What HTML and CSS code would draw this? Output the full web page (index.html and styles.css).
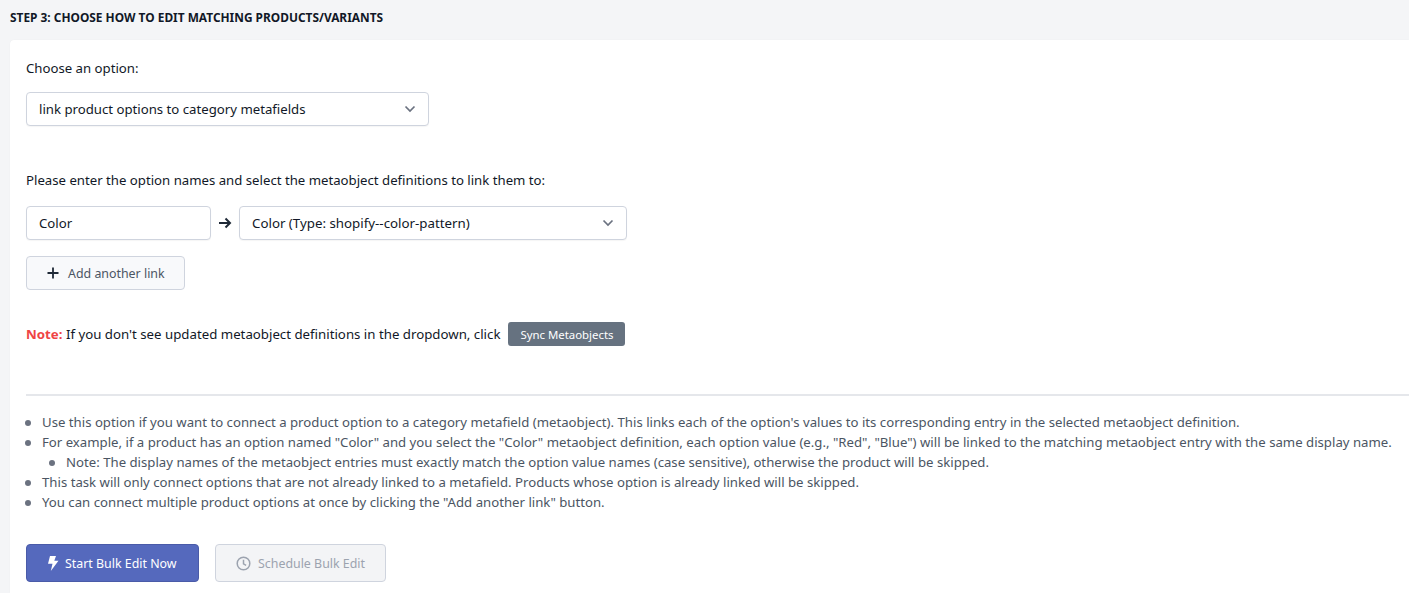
FILE: index.html
```html
<!DOCTYPE html>
<html lang="en">
<head>
<meta charset="utf-8">
<title>Step 3</title>
<link rel="stylesheet" href="styles.css">
</head>
<body>
<h2 class="step-title">STEP 3: CHOOSE HOW TO EDIT MATCHING PRODUCTS/VARIANTS</h2>
<section class="card">
  <label class="label">Choose an option:</label>
  <div class="field select-main">
    <span>link product options to category metafields</span>
    <svg class="chev" width="12" height="8" viewBox="0 0 12 8"><path d="M1.500 1.500 6 6l4.500-4.500" fill="none" stroke="#6b7280" stroke-width="1.700"/></svg>
  </div>
  <p class="label prompt">Please enter the option names and select the metaobject definitions to link them to:</p>
  <div class="link-row">
    <div class="field name-input"><span>Color</span></div>
    <svg class="arrow" width="14" height="12" viewBox="0 0 14 12"><path d="M1 6h11M7.500 1.500 12 6l-4.500 4.500" fill="none" stroke="#1f2937" stroke-width="2"/></svg>
    <div class="field select-def">
      <span>Color (Type: shopify--color-pattern)</span>
      <svg class="chev" width="12" height="8" viewBox="0 0 12 8"><path d="M1.500 1.500 6 6l4.500-4.500" fill="none" stroke="#6b7280" stroke-width="1.700"/></svg>
    </div>
  </div>
  <button class="btn-add" type="button">
    <svg width="12" height="12" viewBox="0 0 12 12"><path d="M6 .500v11M.500 6h11" fill="none" stroke="#1f2937" stroke-width="1.800"/></svg>
    <span>Add another link</span>
  </button>
  <div class="note">
    <span><strong class="note-tag">Note:</strong> If you don't see updated metaobject definitions in the dropdown, click</span>
    <button class="btn-sync" type="button">Sync Metaobjects</button>
  </div>
  <hr class="rule">
  <ul class="help">
    <li>Use this option if you want to connect a product option to a category metafield (metaobject). This links each of the option's values to its corresponding entry in the selected metaobject definition.</li>
    <li>For example, if a product has an option named "Color" and you select the "Color" metaobject definition, each option value (e.g., "Red", "Blue") will be linked to the matching metaobject entry with the same display name.
      <ul><li>Note: The display names of the metaobject entries must exactly match the option value names (case sensitive), otherwise the product will be skipped.</li></ul>
    </li>
    <li>This task will only connect options that are not already linked to a metafield. Products whose option is already linked will be skipped.</li>
    <li>You can connect multiple product options at once by clicking the "Add another link" button.</li>
  </ul>
  <div class="actions">
    <button class="btn-start" type="button">
      <svg width="12" height="15" viewBox="0 0 12 15"><path d="M3 0h6L7.300 4.800H11.500L3.800 15l1.700-7.200H1z" fill="#fff"/></svg>
      <span>Start Bulk Edit Now</span>
    </button>
    <button class="btn-schedule" type="button">
      <svg width="15" height="15" viewBox="0 0 15 15"><circle cx="7.500" cy="7.500" r="6.300" fill="none" stroke="#9ca3af" stroke-width="1.500"/><path d="M7.500 3.800v4l2.600 1.500" fill="none" stroke="#9ca3af" stroke-width="1.500"/></svg>
      <span>Schedule Bulk Edit</span>
    </button>
  </div>
</section>
</body>
</html>
```
FILE: styles.css
```css
* { box-sizing: border-box; }
html, body { margin: 0; height: 593px; overflow: hidden; }
body {
  background: #f4f5f7;
  font-family: "Noto Sans", "Open Sans", sans-serif;
  font-size: 13.200px;
  color: #111827;
  padding: 9px 0 0 10px;
}
.step-title {
  margin: 0 0 15px;
  font-size: 11.900px;
  line-height: 16px;
  font-weight: 700;
  color: #111827;
}
.card {
  height: 553px;
  background: #fff;
  border-radius: 4px 0 0 0;
  padding: 19px 0 0 16px;
  box-shadow: 0 0 1px rgba(0,0,0,.08);
}
.label { display: block; margin: 0; line-height: 18px; }
.field {
  display: flex;
  align-items: center;
  justify-content: space-between;
  height: 34px;
  background: #fff;
  border: 1px solid #cfd4de;
  border-radius: 4px;
  padding: 0 12px;
  box-shadow: 0 1px 1px rgba(0,0,0,.04);
}
.select-main { width: 403px; margin-top: 15px; }
.prompt { margin-top: 45px; }
.link-row { display: flex; align-items: center; margin-top: 17px; }
.name-input { width: 185px; }
.arrow { margin: 0 7px; }
.select-def { width: 388px; font-size: 13.300px; }
.btn-add {
  display: flex; align-items: center; gap: 9px;
  width: 159px; height: 34px; margin-top: 16px; padding: 0 0 0 20px;
  background: #f8f9fb; border: 1px solid #cfd4de; border-radius: 4px;
  font: inherit; font-size: 12.400px; color: #4b5563;
}
.note { display: flex; align-items: center; gap: 8px; margin-top: 32px; height: 24px; font-size: 13.260px; }
.note-tag { color: #ef4444; }
.btn-sync {
  height: 24px; width: 117px; padding: 0;
  background: #667280; border: 0; border-radius: 3px;
  color: #fff; font: inherit; font-size: 11.400px;
}
.rule { margin: 48px 0 0; border: 0; border-top: 2px solid #e5e7eb; }
.help {
  margin: 16px 0 0; padding: 0 0 0 16px; list-style: none;
  font-size: 13.200px; line-height: 20px; color: #4b5563;
}
.help li::before {
  content: "";
  display: inline-block;
  width: 6px; height: 6px;
  margin: 0 11px 0 -17px;
  border-radius: 50%;
  background: #6b7280;
  vertical-align: 1px;
}
.help ul { margin: 0; padding: 0 0 0 24px; list-style: none; }
.actions { display: flex; gap: 16px; margin-top: 32px; }
.btn-start, .btn-schedule {
  display: flex; align-items: center; height: 38px;
  border-radius: 4px; font: inherit; font-size: 12.400px; padding: 0 0 0 20px;
}
.btn-start { gap: 6px; width: 173px; background: #5569bd; border: 1px solid #4a5ba8; color: #fff; }
.btn-schedule { gap: 7px; width: 171px; background: #f3f4f6; border: 1px solid #cfd4de; color: #9ca3af; }
```
